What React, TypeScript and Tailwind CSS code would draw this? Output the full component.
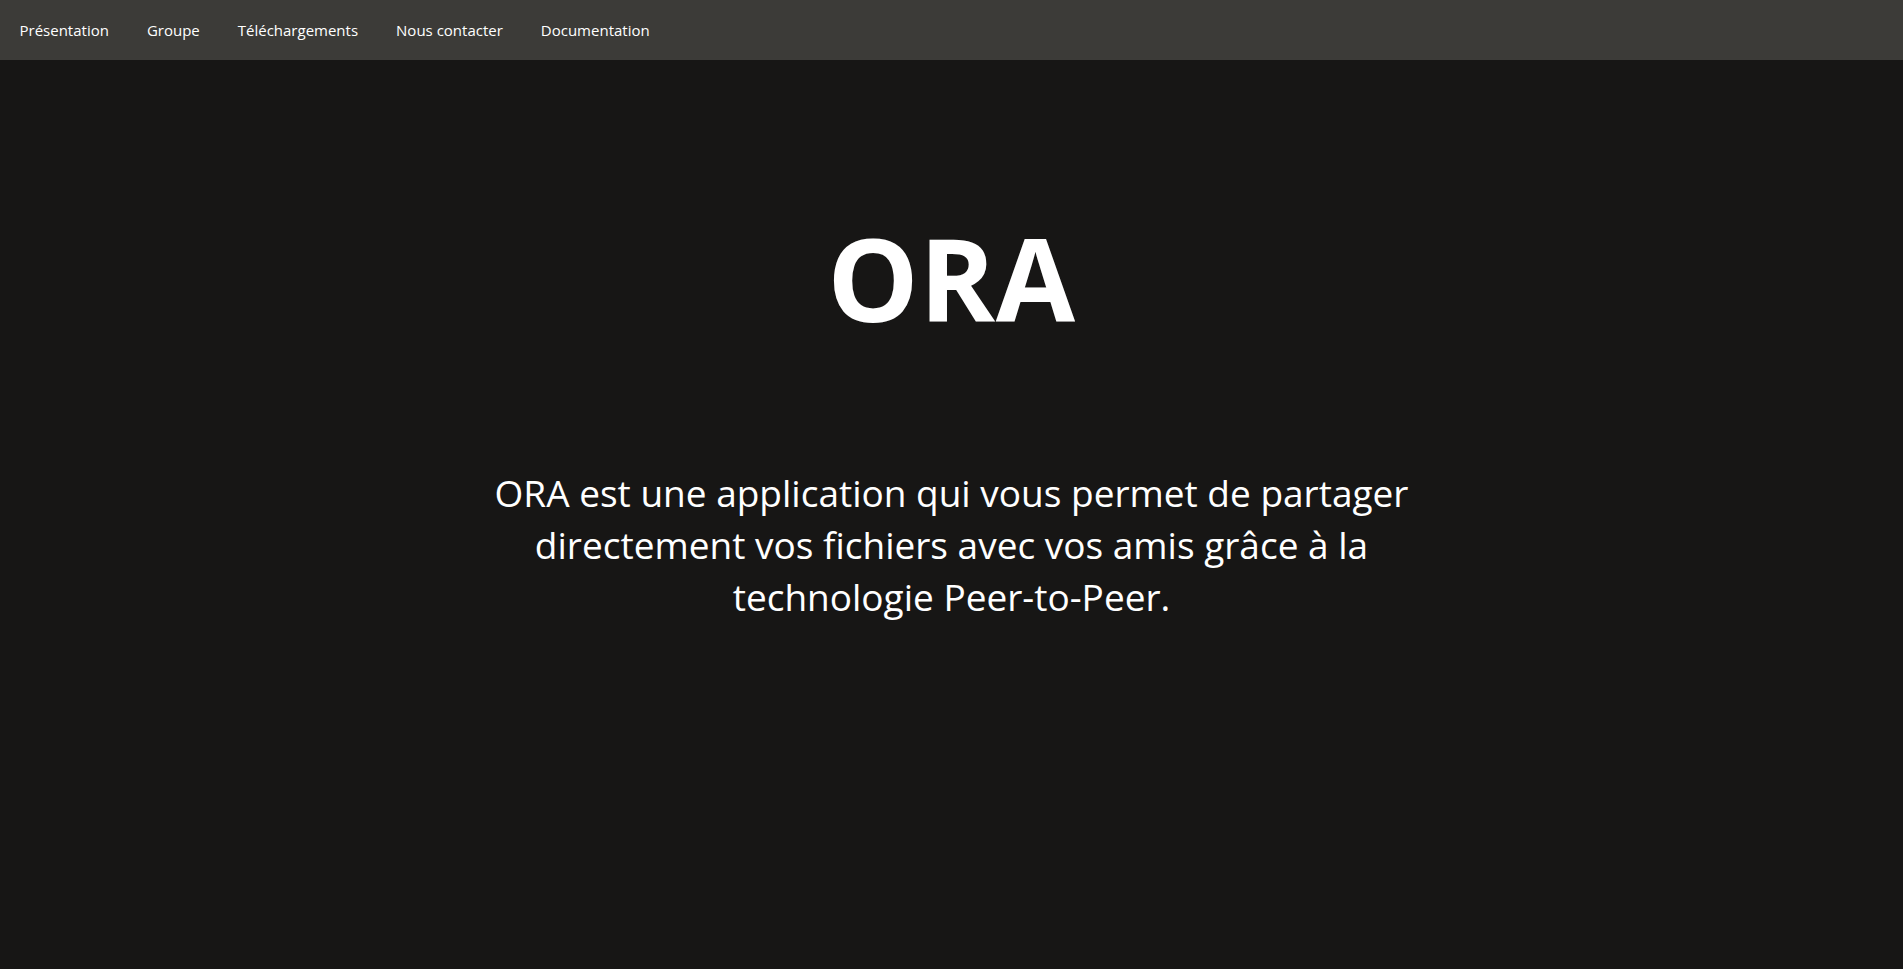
import React from "react";

const navItems = ["Présentation", "Groupe", "Téléchargements", "Nous contacter", "Documentation"];

export default function App() {
  return (
    <div
      className="min-h-[969px] w-full bg-[#171615] text-white flex flex-col"
      style={{ fontFamily: '"Open Sans", "Noto Sans", sans-serif' }}
    >
      <nav className="h-[60px] bg-[#3c3b38] flex items-center pl-[0.5px]">
        {navItems.map((item) => (
          <a key={item} className="px-[19px] text-[15px] text-white cursor-pointer">
            {item}
          </a>
        ))}
      </nav>
      <main className="flex flex-col items-center">
        <h1 className="mt-[160px] text-[115px] font-bold leading-[1] tracking-[0.5px]">ORA</h1>
        <p className="mt-[132px] text-center text-[37px] leading-[52px]">
          ORA est une application qui vous permet de partager
          <br />
          directement vos fichiers avec vos amis grâce à la
          <br />
          technologie Peer-to-Peer.
        </p>
      </main>
    </div>
  );
}
